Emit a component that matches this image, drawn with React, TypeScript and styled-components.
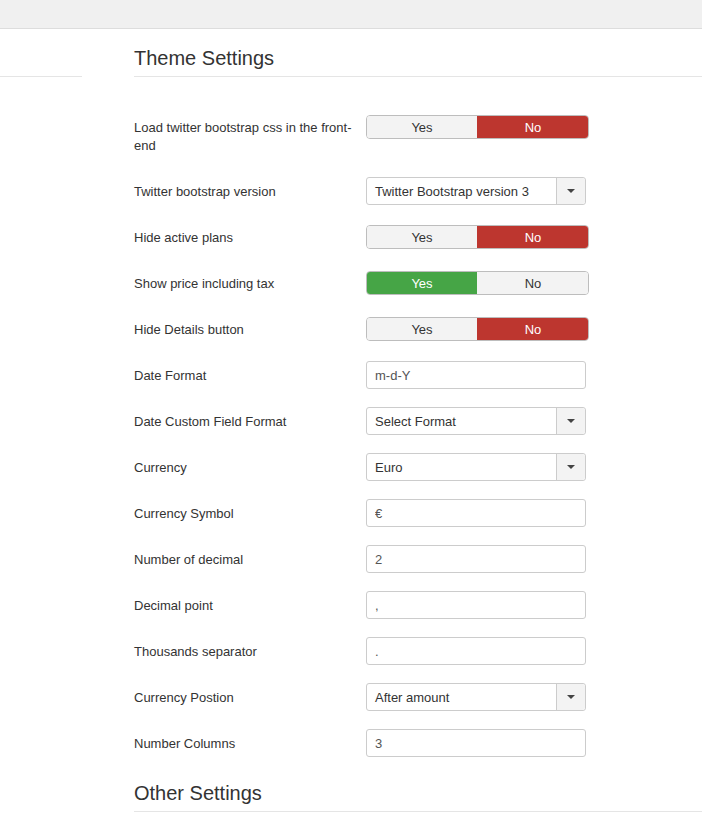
import styled, { createGlobalStyle } from 'styled-components'

const GlobalStyle = createGlobalStyle`
  body {
    margin: 0;
    background: #ffffff;
    font-family: 'Liberation Sans', Arial, sans-serif;
    color: #333333;
  }
`

type Field =
  | { kind: 'toggle'; label: string; value: 'yes' | 'no' }
  | { kind: 'select'; label: string; value: string }
  | { kind: 'input'; label: string; value: string }

const fields: Field[] = [
  { kind: 'toggle', label: 'Load twitter bootstrap css in the front-end', value: 'no' },
  { kind: 'select', label: 'Twitter bootstrap version', value: 'Twitter Bootstrap version 3' },
  { kind: 'toggle', label: 'Hide active plans', value: 'no' },
  { kind: 'toggle', label: 'Show price including tax', value: 'yes' },
  { kind: 'toggle', label: 'Hide Details button', value: 'no' },
  { kind: 'input', label: 'Date Format', value: 'm-d-Y' },
  { kind: 'select', label: 'Date Custom Field Format', value: 'Select Format' },
  { kind: 'select', label: 'Currency', value: 'Euro' },
  { kind: 'input', label: 'Currency Symbol', value: '€' },
  { kind: 'input', label: 'Number of decimal', value: '2' },
  { kind: 'input', label: 'Decimal point', value: ',' },
  { kind: 'input', label: 'Thousands separator', value: '.' },
  { kind: 'select', label: 'Currency Postion', value: 'After amount' },
  { kind: 'input', label: 'Number Columns', value: '3' },
]

const App = () => {
  return (
    <>
      <GlobalStyle />
      <TopBar />
      <Layout>
        <Sidebar />
        <Main>
          <Legend>Theme Settings</Legend>
          <Form>
            {fields.map((f) => (
              <Row key={f.label}>
                <Label>{f.label}</Label>
                {f.kind === 'toggle' && (
                  <Toggle>
                    <ToggleOption $active={f.value === 'yes'} $tone="green">Yes</ToggleOption>
                    <ToggleOption $active={f.value === 'no'} $tone="red">No</ToggleOption>
                  </Toggle>
                )}
                {f.kind === 'select' && (
                  <Select>
                    <SelectValue>{f.value}</SelectValue>
                    <Caret>
                      <svg width="8" height="4" viewBox="0 0 8 4">
                        <path d="M0 0 L8 0 L4 4 Z" fill="#444" />
                      </svg>
                    </Caret>
                  </Select>
                )}
                {f.kind === 'input' && <Input readOnly value={f.value} />}
              </Row>
            ))}
          </Form>
          <Legend $top>Other Settings</Legend>
        </Main>
      </Layout>
    </>
  )
}

const TopBar = styled.div`
  height: 28px;
  background: #f0f0f0;
  border-bottom: 1px solid #dddddd;
`

const Layout = styled.div`
  display: flex;
  align-items: flex-start;
`

const Sidebar = styled.div`
  width: 82px;
  height: 47px;
  border-bottom: 1px solid #e5e5e5;
  flex-shrink: 0;
`

const Main = styled.div`
  flex: 1;
  margin-left: 52px;
  padding-top: 17px;
`

const Legend = styled.div<{ $top?: boolean }>`
  font-size: 20px;
  line-height: 24px;
  color: #333333;
  padding-bottom: 6px;
  border-bottom: 1px solid #e5e5e5;
  margin-top: ${(p) => (p.$top ? '24px' : '0')};
`

const Form = styled.div`
  padding-top: 36px;
`

const Row = styled.div`
  display: grid;
  grid-template-columns: 232px 223px;
  align-items: start;
  margin-bottom: 18px;
`

const Label = styled.div`
  font-size: 13px;
  line-height: 18px;
  padding: 6px 8px 4px 0;
  color: #333333;
`

const Toggle = styled.div`
  display: flex;
  margin-top: 2px;
  height: 24px;
  border-radius: 4px;
  overflow: hidden;
  border: 1px solid #bdbdbd;
  box-sizing: border-box;
`

const ToggleOption = styled.div<{ $active: boolean; $tone: 'green' | 'red' }>`
  flex: 1;
  display: flex;
  align-items: center;
  justify-content: center;
  font-size: 13px;
  background: ${(p) => (p.$active ? (p.$tone === 'green' ? '#46a546' : '#bd362f') : '#f3f3f3')};
  color: ${(p) => (p.$active ? '#ffffff' : '#333333')};
  & + & {
    border-left: 1px solid ${(p) => (p.$active ? 'transparent' : '#cfcfcf')};
  }
`

const Select = styled.div`
  width: 220px;
  height: 28px;
  box-sizing: border-box;
  border: 1px solid #cccccc;
  border-radius: 3px;
  display: flex;
  background: #ffffff;
`

const SelectValue = styled.div`
  flex: 1;
  display: flex;
  align-items: center;
  padding-left: 8px;
  font-size: 13px;
  color: #333333;
`

const Caret = styled.div`
  width: 28px;
  display: flex;
  align-items: center;
  justify-content: center;
  background: #f3f3f3;
  border-left: 1px solid #cccccc;
  border-radius: 0 3px 3px 0;
`

const Input = styled.input`
  width: 220px;
  height: 28px;
  box-sizing: border-box;
  border: 1px solid #cccccc;
  border-radius: 3px;
  padding: 0 8px;
  font-family: 'Liberation Sans', Arial, sans-serif;
  font-size: 13px;
  color: #555555;
  outline: none;
`

export default App
